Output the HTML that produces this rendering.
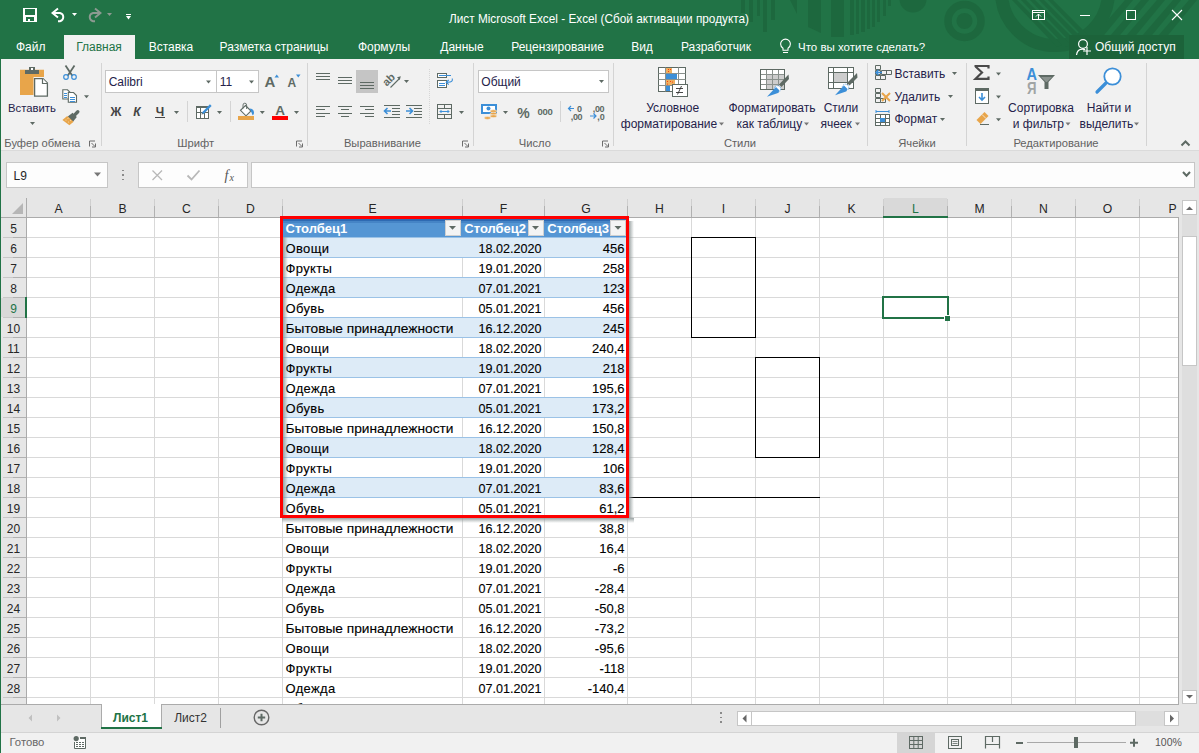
<!DOCTYPE html>
<html><head><meta charset="utf-8"><title>Excel</title>
<style>
html,body{margin:0;padding:0;width:1199px;height:753px;overflow:hidden;background:#fff}
svg{display:block}
rect{shape-rendering:crispEdges}
text{font-family:"Liberation Sans",sans-serif;white-space:pre}
</style></head><body>
<svg width="1199" height="753" viewBox="0 0 1199 753">
<rect x="0" y="0" width="1199" height="59" fill="#217346" />
<rect x="0" y="59" width="1199" height="92" fill="#f1f1f1" />
<rect x="0" y="150" width="1199" height="1" fill="#dadada"/>
<rect x="0" y="151" width="1199" height="47" fill="#e6e6e6" />
<defs><clipPath id="tclip"><rect x="0" y="0" width="1199" height="59"/></clipPath></defs>
<g opacity="0.85" clip-path="url(#tclip)"><rect x="741" y="0" width="4" height="13" fill="#1d673d"/><rect x="749" y="0" width="4" height="22" fill="#1d673d"/><rect x="757" y="0" width="3" height="16" fill="#1d673d"/><rect x="763" y="0" width="4" height="32" fill="#1d673d"/><rect x="771" y="0" width="4" height="20" fill="#1d673d"/><rect x="850" y="0" width="4" height="35" fill="#1d673d"/><rect x="856" y="0" width="3" height="34" fill="#1d673d"/><rect x="861" y="0" width="4" height="32" fill="#1d673d"/><rect x="867" y="0" width="3" height="29" fill="#1d673d"/><rect x="872" y="0" width="3" height="27" fill="#1d673d"/><rect x="877" y="0" width="3" height="22" fill="#1d673d"/><rect x="883" y="0" width="3" height="16" fill="#1d673d"/><rect x="888" y="0" width="3" height="6" fill="#1d673d"/><path d="M790 0 L797 0 L797 14 Z" fill="#1d673d"/><path d="M808 0 L821 0 L821 33 L808 27 Z" fill="#1d673d"/><rect x="831" y="0" width="13" height="37" fill="#1d673d"/><circle cx="913" cy="-1" r="13.5" fill="#1d673d"/><circle cx="964.5" cy="21" r="16.5" fill="none" stroke="#1d673d" stroke-width="7.5"/><circle cx="964.5" cy="21" r="8" fill="#1d673d"/><circle cx="1055" cy="-8" r="53.5" fill="none" stroke="#1d673d" stroke-width="13"/><path d="M1012 0 L1017 0 L1062 45 L1057 47 Z" fill="#1d673d"/><path d="M1021 0 L1026 0 L1071 45 L1066 47 Z" fill="#1d673d"/><path d="M1030 0 L1035 0 L1080 45 L1075 47 Z" fill="#1d673d"/><path d="M1039 0 L1044 0 L1089 45 L1084 47 Z" fill="#1d673d"/><path d="M1048 0 L1053 0 L1098 45 L1093 47 Z" fill="#1d673d"/><path d="M1125 0 L1133 0 L1100 40 L1094 36 Z" fill="#1d673d"/><path d="M1141 0 L1149 0 L1116 40 L1110 36 Z" fill="#1d673d"/><path d="M1157 0 L1165 0 L1132 40 L1126 36 Z" fill="#1d673d"/><path d="M1173 0 L1181 0 L1148 40 L1142 36 Z" fill="#1d673d"/><path d="M1189 0 L1197 0 L1164 40 L1158 36 Z" fill="#1d673d"/></g>
<rect x="23" y="8" width="14" height="14" fill="#ffffff"/>
<rect x="25" y="9.2" width="10" height="5.5" fill="#217346"/>
<rect x="26" y="17" width="8" height="3.7" fill="#217346"/>
<rect x="28.3" y="18.7" width="2" height="2" fill="#ffffff"/>
<path d="M58 8.5 L52.5 13 L58 17.5" fill="none" stroke="#ffffff" stroke-width="1.9"/>
<path d="M53 13 H60 A4.2 4.2 0 0 1 60 21.2 H58" fill="none" stroke="#ffffff" stroke-width="1.9"/>
<path d="M72 13 H77 L74.5 16 Z" fill="#ffffff"/>
<path d="M95 8.5 L100.5 13 L95 17.5" fill="none" stroke="#8c9a91" stroke-width="1.9"/>
<path d="M100 13 H93 A4.2 4.2 0 0 0 93 21.2 H95" fill="none" stroke="#8c9a91" stroke-width="1.9"/>
<path d="M107 13 H112 L109.5 16 Z" fill="#8c9a91"/>
<rect x="126" y="13.5" width="5" height="1.2" fill="#ffffff"/>
<path d="M126 16 H131 L128.5 19.5 Z" fill="#ffffff"/>
<text x="449" y="23" font-size="12.6" fill="#ffffff" textLength="300" lengthAdjust="spacingAndGlyphs">Лист Microsoft Excel - Excel (Сбой активации продукта)</text>
<rect x="1032.5" y="10.5" width="12" height="9" fill="none" stroke="#fff" stroke-width="1"/>
<rect x="1032" y="12" width="13" height="1" fill="#fff"/>
<path d="M1036 16.5 L1038.5 14 L1041 16.5 M1038.5 14 V19.5" fill="none" stroke="#fff" stroke-width="1"/>
<rect x="1080" y="15" width="10" height="1" fill="#fff"/>
<rect x="1126.5" y="10.5" width="9" height="9" fill="none" stroke="#fff" stroke-width="1"/>
<path d="M1172 10 L1182 20 M1182 10 L1172 20" stroke="#fff" stroke-width="1.1"/>
<rect x="64" y="35" width="71" height="24" fill="#f1f1f1" />
<text x="16" y="51" font-size="12" fill="#fff" >Файл</text>
<text x="99" y="51" font-size="12" fill="#217346" text-anchor="middle" >Главная</text>
<text x="171" y="51" font-size="12" fill="#fff" text-anchor="middle" >Вставка</text>
<text x="274" y="51" font-size="12" fill="#fff" text-anchor="middle" >Разметка страницы</text>
<text x="384" y="51" font-size="12" fill="#fff" text-anchor="middle" >Формулы</text>
<text x="462" y="51" font-size="12" fill="#fff" text-anchor="middle" >Данные</text>
<text x="557.5" y="51" font-size="12" fill="#fff" text-anchor="middle" >Рецензирование</text>
<text x="642" y="51" font-size="12" fill="#fff" text-anchor="middle" >Вид</text>
<text x="716" y="51" font-size="12" fill="#fff" text-anchor="middle" >Разработчик</text>
<path d="M783 50.3 V48.3 C781.3 47 780.6 45.6 780.6 44 A4.9 4.9 0 0 1 790.4 44 C790.4 45.6 789.7 47 788 48.3 V50.3 Z" fill="none" stroke="#fff" stroke-width="1.1"/>
<rect x="783" y="52" width="5" height="1" fill="#fff"/>
<text x="798" y="51" font-size="11.5" fill="#fff" >Что вы хотите сделать?</text>
<rect x="1069" y="35" width="115" height="24" fill="#1c633a" />
<circle cx="1083" cy="44" r="4.4" fill="none" stroke="#fff" stroke-width="1.2"/>
<path d="M1076.5 55 C1077 51.5 1079.5 49.2 1082.5 49.2 C1083.5 49.2 1084.5 49.4 1085.2 49.8" fill="none" stroke="#fff" stroke-width="1.2"/>
<path d="M1083 51 H1091 M1087 47 V55" stroke="#fff" stroke-width="1.2"/>
<text x="1095" y="51" font-size="12" fill="#fff" >Общий доступ</text>
<rect x="101" y="63" width="1" height="83" fill="#d4d4d4"/>
<rect x="307" y="63" width="1" height="83" fill="#d4d4d4"/>
<rect x="473" y="63" width="1" height="83" fill="#d4d4d4"/>
<rect x="613" y="63" width="1" height="83" fill="#d4d4d4"/>
<rect x="867" y="63" width="1" height="83" fill="#d4d4d4"/>
<rect x="966" y="63" width="1" height="83" fill="#d4d4d4"/>
<rect x="1146" y="63" width="1" height="83" fill="#d4d4d4"/>
<path d="M20 69.8 H44 V77 H33.5 V95 H20 Z" fill="#e8a54a"/>
<rect x="25" y="70" width="14" height="4" fill="#5e6a64"/>
<rect x="29" y="67" width="6" height="3.5" fill="#5e6a64"/>
<rect x="31" y="68.2" width="2" height="1.6" fill="#fff"/>
<path d="M34.6 78.6 H43 L47.4 83 V96.2 H34.6 Z" fill="#fff" stroke="#5e6a64" stroke-width="1.3"/>
<path d="M42.5 78.6 V83.5 H47.4" fill="#fff" stroke="#5e6a64" stroke-width="1.2"/>
<text x="32" y="112" font-size="11.3" fill="#25224a" text-anchor="middle" >Вставить</text>
<path d="M30.0 122 L35.0 122 L32.5 125.0 Z" fill="#5e6a64"/>
<path d="M65.5 65.5 L72.5 76 M74.5 65.5 L67.5 76" stroke="#5e6a64" stroke-width="1.8" fill="none"/>
<circle cx="66" cy="77" r="2.3" fill="none" stroke="#3c8fd8" stroke-width="1.2"/>
<circle cx="74" cy="77" r="2.3" fill="none" stroke="#3c8fd8" stroke-width="1.2"/>
<path d="M62.8 89.8 H67.5 L70 92.3 V99 H62.8 Z" fill="#fff" stroke="#5e6a64" stroke-width="1.1"/>
<path d="M68.3 92.5 H73.5 L76.5 95.5 V102.3 H68.3 Z" fill="#fff" stroke="#5e6a64" stroke-width="1.1"/>
<rect x="64" y="93" width="3" height="1" fill="#3c8fd8"/>
<rect x="64" y="95" width="3" height="1" fill="#3c8fd8"/>
<rect x="64" y="97" width="3" height="1" fill="#3c8fd8"/>
<rect x="70" y="96.5" width="5" height="1" fill="#3c8fd8"/>
<rect x="70" y="98.5" width="5" height="1" fill="#3c8fd8"/>
<rect x="70" y="100.5" width="5" height="1" fill="#3c8fd8"/>
<path d="M84.0 95.3 L89.0 95.3 L86.5 98.3 Z" fill="#5e6a64"/>
<path d="M77.8 111.8 L74.5 115.1" stroke="#5e6a64" stroke-width="3.4" stroke-linecap="round"/>
<path d="M67.8 116.6 L72.6 112.8 L76.8 117 L73 121.8 Z" fill="#5e6a64"/>
<path d="M62.4 120 L67.2 116 L73.6 121.8 L69.4 125.2 Z" fill="#e8a54a"/>
<circle cx="66" cy="120" r="0.6" fill="#f7d9a8"/><circle cx="68.5" cy="122" r="0.6" fill="#f7d9a8"/><circle cx="68" cy="118.5" r="0.6" fill="#f7d9a8"/><circle cx="70.5" cy="120.5" r="0.6" fill="#f7d9a8"/>
<text x="42.3" y="146.6" font-size="11.2" fill="#616161" text-anchor="middle" >Буфер обмена</text>
<path d="M89.5 146.5 V141.0 H95" fill="none" stroke="#6d6d6d" stroke-width="1"/>
<path d="M91.5 143.0 L95 146.5 M95.5 143.5 V147.0 H92" fill="none" stroke="#6d6d6d" stroke-width="1"/>
<rect x="105.5" y="70.5" width="153" height="22" fill="#fff" stroke="#c6c6c6" stroke-width="1"/>
<rect x="216" y="71" width="1" height="21" fill="#c6c6c6"/>
<text x="108.7" y="86.2" font-size="12" fill="#25224a" >Calibri</text>
<path d="M206.0 80.5 L211.0 80.5 L208.5 83.5 Z" fill="#5e6a64"/>
<text x="219.7" y="86.2" font-size="12" fill="#25224a" >11</text>
<path d="M249.0 80.5 L254.0 80.5 L251.5 83.5 Z" fill="#5e6a64"/>
<text x="264.5" y="87" font-size="15" fill="#5e6a64" font-weight="700" >A</text>
<path d="M274.5 77.5 L279 77.5 L276.75 74.5 Z" fill="#3c8fd8"/>
<text x="287.5" y="87" font-size="12" fill="#5e6a64" font-weight="700" >A</text>
<path d="M296 74.5 L300.5 74.5 L298.25 77.5 Z" fill="#3c8fd8"/>
<text x="116" y="115.5" font-size="12" fill="#444" text-anchor="middle" font-weight="700" >Ж</text>
<text x="137" y="115.5" font-size="12" fill="#444" text-anchor="middle" font-weight="700" font-style="italic">К</text>
<text x="160" y="115.5" font-size="12" fill="#444" text-anchor="middle" font-weight="700" >Ч</text>
<rect x="155" y="117" width="10" height="1" fill="#444"/>
<path d="M174.0 111 L179.0 111 L176.5 114.0 Z" fill="#5e6a64"/>
<rect x="187" y="101" width="1" height="21" fill="#d4d4d4"/>
<rect x="196.5" y="106.5" width="12" height="12" fill="#fff" stroke="#5e6a64" stroke-width="1.2"/>
<rect x="196" y="106" width="13" height="2" fill="#5e6a64" />
<path d="M200.5 108 V118.5 M196.5 112.5 H208.5 M204.5 112.5 V118.5" stroke="#5e6a64" stroke-width="1"/>
<path d="M202.5 113.5 L210.8 105.2" stroke="#3c8fd8" stroke-width="2.4"/>
<path d="M201.5 114.5 L202 112.5 L203.5 114 Z" fill="#5e6a64"/>
<path d="M217.0 111 L222.0 111 L219.5 114.0 Z" fill="#5e6a64"/>
<rect x="230" y="101" width="1" height="21" fill="#d4d4d4"/>
<path d="M245.5 105.5 L251 111 L246 115.8 L240.5 110.3 Z" fill="#fff" stroke="#5e6a64" stroke-width="1.1"/>
<path d="M243 108.5 V105 A1.8 1.8 0 0 1 246.6 105 V109" fill="none" stroke="#5e6a64" stroke-width="0.9"/>
<path d="M249.5 108.5 C252 108.5 254 110 254 112.5 C254 114 253.3 115.2 252.6 115.2 L251.2 111.8 Z" fill="#3c8fd8"/>
<rect x="238" y="116" width="16" height="4" fill="#e8a54a" />
<path d="M259.8 111 L264.8 111 L262.3 114.0 Z" fill="#5e6a64"/>
<text x="280" y="115" font-size="13.5" fill="#5e6a64" text-anchor="middle" font-weight="700" >A</text>
<rect x="272" y="116" width="16" height="4" fill="#ff0000" />
<path d="M294.0 111 L299.0 111 L296.5 114.0 Z" fill="#5e6a64"/>
<text x="195.7" y="146.6" font-size="11.2" fill="#616161" text-anchor="middle" >Шрифт</text>
<path d="M296.5 146.5 V141.0 H302" fill="none" stroke="#6d6d6d" stroke-width="1"/>
<path d="M298.5 143.0 L302 146.5 M302.5 143.5 V147.0 H299" fill="none" stroke="#6d6d6d" stroke-width="1"/>
<rect x="316" y="73" width="14" height="1" fill="#5e6a64"/>
<rect x="316" y="76" width="14" height="1" fill="#5e6a64"/>
<rect x="316" y="79" width="14" height="1" fill="#5e6a64"/>
<rect x="338" y="77" width="14" height="1" fill="#5e6a64"/>
<rect x="338" y="80" width="14" height="1" fill="#5e6a64"/>
<rect x="338" y="83" width="14" height="1" fill="#5e6a64"/>
<rect x="356" y="70" width="22" height="22.5" fill="#c5c5c5" />
<rect x="360" y="82" width="14" height="1" fill="#5e6a64"/>
<rect x="360" y="85" width="14" height="1" fill="#5e6a64"/>
<rect x="360" y="88" width="14" height="1" fill="#5e6a64"/>
<text x="388.5" y="83.5" font-size="11" fill="#5e6a64" text-anchor="middle" font-weight="700" transform="rotate(-45 388.5 79.5)">ab</text>
<path d="M390.5 87.5 L399.5 78.5" stroke="#5e6a64" stroke-width="1.1"/>
<path d="M397 77.2 L400.8 76.2 L399.8 80 Z" fill="#5e6a64"/>
<path d="M404.0 80 L409.0 80 L406.5 83.0 Z" fill="#5e6a64"/>
<path d="M429.5 69 V124" stroke="#d6d6d6" stroke-width="1" stroke-dasharray="1 1"/>
<rect x="437.5" y="73.5" width="9" height="4" fill="#fff" stroke="#5e6a64" stroke-width="1.1"/>
<rect x="437.5" y="80.5" width="9" height="7" fill="#fff" stroke="#5e6a64" stroke-width="1.1"/>
<rect x="439" y="75" width="12" height="1" fill="#3c8fd8"/>
<rect x="439" y="82.5" width="6" height="1" fill="#3c8fd8"/>
<rect x="439" y="84.5" width="6" height="1" fill="#3c8fd8"/>
<path d="M452.3 78.5 C452.8 81 451.5 82.3 448 82.3 H446.5" fill="none" stroke="#3c8fd8" stroke-width="1.1"/>
<path d="M448.7 80 L446.3 82.3 L448.7 84.6" fill="none" stroke="#3c8fd8" stroke-width="1.2"/>
<rect x="437.5" y="104.5" width="14" height="14" fill="none" stroke="#5e6a64" stroke-width="1.2"/>
<path d="M437.5 108.5 H451.5 M437.5 114.5 H451.5 M444.5 104.5 V108.5 M444.5 114.5 V118.5" stroke="#5e6a64" stroke-width="1"/>
<path d="M440 111.5 H449 M441.5 110 L440 111.5 L441.5 113 M447.5 110 L449 111.5 L447.5 113" fill="none" stroke="#3c8fd8" stroke-width="1"/>
<path d="M459.0 111 L464.0 111 L461.5 114.0 Z" fill="#5e6a64"/>
<rect x="316" y="106" width="14" height="1" fill="#5e6a64"/>
<rect x="316" y="109" width="9" height="1" fill="#5e6a64"/>
<rect x="316" y="113" width="14" height="1" fill="#5e6a64"/>
<rect x="316" y="116" width="9" height="1" fill="#5e6a64"/>
<rect x="338" y="106" width="14" height="1" fill="#5e6a64"/>
<rect x="338" y="113" width="14" height="1" fill="#5e6a64"/>
<rect x="341" y="109" width="8" height="1" fill="#5e6a64"/>
<rect x="341" y="116" width="8" height="1" fill="#5e6a64"/>
<rect x="360" y="106" width="14" height="1" fill="#5e6a64"/>
<rect x="360" y="113" width="14" height="1" fill="#5e6a64"/>
<rect x="365" y="109" width="9" height="1" fill="#5e6a64"/>
<rect x="365" y="116" width="9" height="1" fill="#5e6a64"/>
<rect x="384" y="105" width="16" height="1" fill="#5e6a64"/>
<rect x="384" y="117" width="16" height="1" fill="#5e6a64"/>
<rect x="392" y="108" width="8" height="1" fill="#5e6a64"/>
<rect x="392" y="111" width="8" height="1" fill="#5e6a64"/>
<rect x="392" y="114" width="8" height="1" fill="#5e6a64"/>
<path d="M384.5 111 H391 M387.5 108 L384.5 111 L387.5 114" fill="none" stroke="#3c8fd8" stroke-width="1.6"/>
<rect x="406" y="105" width="16" height="1" fill="#5e6a64"/>
<rect x="406" y="117" width="16" height="1" fill="#5e6a64"/>
<rect x="414" y="108" width="8" height="1" fill="#5e6a64"/>
<rect x="414" y="111" width="8" height="1" fill="#5e6a64"/>
<rect x="414" y="114" width="8" height="1" fill="#5e6a64"/>
<path d="M406 111 H412.5 M409.5 108 L412.5 111 L409.5 114" fill="none" stroke="#3c8fd8" stroke-width="1.6"/>
<text x="382.4" y="146.6" font-size="11.2" fill="#616161" text-anchor="middle" >Выравнивание</text>
<path d="M462.5 146.5 V141.0 H468" fill="none" stroke="#6d6d6d" stroke-width="1"/>
<path d="M464.5 143.0 L468 146.5 M468.5 143.5 V147.0 H465" fill="none" stroke="#6d6d6d" stroke-width="1"/>
<rect x="478.5" y="70.5" width="130" height="22" fill="#fff" stroke="#c6c6c6" stroke-width="1"/>
<text x="481.3" y="86" font-size="12" fill="#25224a" >Общий</text>
<path d="M599.0 80 L604.0 80 L601.5 83.0 Z" fill="#5e6a64"/>
<rect x="482" y="105" width="14" height="8" fill="#fff" stroke="#3c8fd8" stroke-width="2"/>
<circle cx="488.5" cy="108.5" r="2" fill="#3c8fd8"/>
<ellipse cx="493.5" cy="111.2" rx="3.3" ry="1.4" fill="#e8a54a" stroke="#f1f1f1" stroke-width="0.6"/>
<ellipse cx="493.5" cy="113.7" rx="3.3" ry="1.4" fill="#e8a54a" stroke="#f1f1f1" stroke-width="0.6"/>
<ellipse cx="493.5" cy="116.2" rx="3.3" ry="1.4" fill="#e8a54a" stroke="#f1f1f1" stroke-width="0.6"/>
<ellipse cx="487.5" cy="118" rx="3.3" ry="1.4" fill="#e8a54a" stroke="#f1f1f1" stroke-width="0.6"/>
<path d="M503.0 111 L508.0 111 L505.5 114.0 Z" fill="#5e6a64"/>
<text x="523.5" y="117.8" font-size="14" fill="#5e6a64" text-anchor="middle" font-weight="700" >%</text>
<text x="545" y="114.8" font-size="9.5" fill="#5e6a64" text-anchor="middle" font-weight="700" letter-spacing="-0.3" >000</text>
<rect x="560" y="101" width="1" height="21" fill="#d4d4d4"/>
<path d="M568.5 108.5 H574 M571 106 L568.5 108.5 L571 111" fill="none" stroke="#3c8fd8" stroke-width="1.2"/>
<text x="579.5" y="112" font-size="9" fill="#5e6a64" text-anchor="middle" font-weight="700" >0</text>
<text x="576.5" y="120" font-size="9" fill="#5e6a64" text-anchor="middle" font-weight="700" letter-spacing="-0.3" >,00</text>
<text x="598.5" y="112" font-size="9" fill="#5e6a64" text-anchor="middle" font-weight="700" letter-spacing="-0.3" >,00</text>
<path d="M590 116 H596 M593.5 113.5 L596 116 L593.5 118.5" fill="none" stroke="#3c8fd8" stroke-width="1.2"/>
<text x="601" y="120" font-size="9" fill="#5e6a64" text-anchor="middle" font-weight="700" >,0</text>
<text x="534.8" y="146.6" font-size="11.2" fill="#616161" text-anchor="middle" >Число</text>
<path d="M602.5 146.5 V141.0 H608" fill="none" stroke="#6d6d6d" stroke-width="1"/>
<path d="M604.5 143.0 L608 146.5 M608.5 143.5 V147.0 H605" fill="none" stroke="#6d6d6d" stroke-width="1"/>
<rect x="658.8" y="67.8" width="26.4" height="23.6" fill="#fff" stroke="#5e6a64" stroke-width="1.3"/>
<path d="M658.5 73.5 H685.5" stroke="#8a918d" stroke-width="1"/>
<path d="M658.5 79.5 H685.5" stroke="#8a918d" stroke-width="1"/>
<path d="M658.5 85.5 H685.5" stroke="#8a918d" stroke-width="1"/>
<path d="M665.5 67.5 V91.5" stroke="#8a918d" stroke-width="1"/>
<path d="M678.5 67.5 V91.5" stroke="#8a918d" stroke-width="1"/>
<rect x="666" y="68" width="6" height="5" fill="#eeb060" />
<rect x="666" y="74" width="11" height="5" fill="#3c8fd8" />
<rect x="666" y="80" width="9" height="5" fill="#eeb060" />
<rect x="666" y="86" width="4" height="5" fill="#3c8fd8" />
<circle cx="668.5" cy="69.5" r="0.55" fill="#ff2a00"/>
<circle cx="670.5" cy="69.5" r="0.55" fill="#ff2a00"/>
<circle cx="668.5" cy="71.5" r="0.55" fill="#ff2a00"/>
<circle cx="667.5" cy="81.5" r="0.55" fill="#ff2a00"/>
<circle cx="670.5" cy="81.5" r="0.55" fill="#ff2a00"/>
<circle cx="672.5" cy="82" r="0.55" fill="#ff2a00"/>
<circle cx="667.5" cy="84" r="0.55" fill="#ff2a00"/>
<rect x="672.3" y="84.3" width="15.2" height="12.2" fill="#fff" stroke="#5e6a64" stroke-width="1.3"/>
<path d="M676 88.5 H683 M676 92.5 H683 M677.5 94.5 L681.5 86" stroke="#333" stroke-width="0.9"/>
<text x="672.7" y="112.3" font-size="12" fill="#25224a" text-anchor="middle" >Условное</text>
<text x="620.8" y="127.7" font-size="12" fill="#25224a" >форматирование</text>
<path d="M719.0 122.5 L724.0 122.5 L721.5 125.5 Z" fill="#777"/>
<rect x="760.5" y="69.5" width="24" height="20" fill="#fff"/>
<rect x="767" y="75" width="18" height="15" fill="#cdcdcd" />
<path d="M760.5 74.5 H784.5" stroke="#8a918d" stroke-width="1"/>
<path d="M760.5 79.5 H784.5" stroke="#8a918d" stroke-width="1"/>
<path d="M760.5 84.5 H784.5" stroke="#8a918d" stroke-width="1"/>
<path d="M766.5 69.5 V89.5" stroke="#8a918d" stroke-width="1"/>
<path d="M772.5 69.5 V89.5" stroke="#8a918d" stroke-width="1"/>
<path d="M778.5 69.5 V89.5" stroke="#8a918d" stroke-width="1"/>
<rect x="760.5" y="69.5" width="24" height="20" fill="none" stroke="#5e6a64" stroke-width="1.2"/>
<path d="M788.5 74.5 L789 79 L781.5 87 L779 84.5 Z" fill="#5e6a64"/>
<circle cx="777.5" cy="89" r="3.3" fill="#fff" stroke="#3c8fd8" stroke-width="0.8" stroke-dasharray="1 0.8"/>
<path d="M776 87 L779.5 90.5 L778 93 L767 96.8 Z" fill="#3c8fd8"/>
<text x="772" y="112.3" font-size="12" fill="#25224a" text-anchor="middle" >Форматировать</text>
<text x="736.5" y="127.7" font-size="12" fill="#25224a" >как таблицу</text>
<path d="M804.0 122.5 L809.0 122.5 L806.5 125.5 Z" fill="#777"/>
<rect x="828.5" y="67.5" width="25" height="21" fill="#fff"/>
<rect x="834" y="73" width="13" height="10" fill="#cdcdcd" />
<path d="M828.5 72.5 H853.5 M828.5 82.5 H853.5 M833.5 67.5 V88.5 M847.5 67.5 V88.5" stroke="#5e6a64" stroke-width="1"/>
<rect x="828.5" y="67.5" width="25" height="21" fill="none" stroke="#5e6a64" stroke-width="1.2"/>
<path d="M857 73 L857.5 77.5 L849.5 85.5 L847 83 Z" fill="#5e6a64"/>
<circle cx="845.5" cy="87.5" r="3.3" fill="#fff" stroke="#3c8fd8" stroke-width="0.8" stroke-dasharray="1 0.8"/>
<path d="M844 85.5 L847.5 89 L846 91.5 L835 95.3 Z" fill="#3c8fd8"/>
<text x="841" y="112.3" font-size="12" fill="#25224a" text-anchor="middle" >Стили</text>
<text x="820.4" y="127.7" font-size="12" fill="#25224a" >ячеек</text>
<path d="M855.0 122.5 L860.0 122.5 L857.5 125.5 Z" fill="#777"/>
<text x="740" y="146.6" font-size="11.2" fill="#616161" text-anchor="middle" >Стили</text>
<path d="M875.5 65.5 h5 v4 h-5 z M875.5 70.5 h5 v4 h-5 z M875.5 75.5 h5 v4 h-5 z M880.5 75.5 h5 v4 h-5 z" fill="none" stroke="#5e6a64" stroke-width="1"/>
<path d="M881.5 70.5 h10 v4 h-10 z M886.5 70.5 V74.5" fill="none" stroke="#5e6a64" stroke-width="1"/>
<path d="M876 72.5 H882 M878.5 70 L876 72.5 L878.5 75" fill="none" stroke="#3c8fd8" stroke-width="1.5"/>
<text x="894.5" y="77.8" font-size="12" fill="#25224a" >Вставить</text>
<path d="M952.0 72 L957.0 72 L954.5 75.0 Z" fill="#5e6a64"/>
<path d="M875.5 88.5 h5 v4 h-5 z M875.5 93.5 h5 v4 h-5 z M875.5 98.5 h5 v4 h-5 z M880.5 98.5 h5 v4 h-5 z" fill="none" stroke="#5e6a64" stroke-width="1"/>
<path d="M882 93 L890 101 M890 93 L882 101" stroke="#e8a54a" stroke-width="2"/>
<text x="894.5" y="100.8" font-size="12" fill="#25224a" >Удалить</text>
<path d="M948.0 95 L953.0 95 L950.5 98.0 Z" fill="#5e6a64"/>
<rect x="875.5" y="114.5" width="14" height="11" fill="#fff" stroke="#5e6a64" stroke-width="1"/>
<path d="M875.5 118.5 H889.5 M875.5 122.5 H889.5 M880.5 114.5 V125.5 M885.5 114.5 V125.5" stroke="#5e6a64" stroke-width="1"/>
<rect x="880" y="118" width="5" height="4" fill="#3c8fd8" />
<path d="M876 111.5 H889 M876 110 V113 M889 110 V113" stroke="#3c8fd8" stroke-width="1"/>
<text x="894.5" y="123.4" font-size="12" fill="#25224a" >Формат</text>
<path d="M940.0 118 L945.0 118 L942.5 121.0 Z" fill="#5e6a64"/>
<text x="917" y="146.6" font-size="11.2" fill="#616161" text-anchor="middle" >Ячейки</text>
<path d="M974.5 66 H988.5 V68.5 M975.5 66.5 L982 72.5 L975.5 78.8 H988.5 V76.5" fill="none" stroke="#4a4a4a" stroke-width="2.2"/>
<path d="M996.0 72.5 L1001.0 72.5 L998.5 75.5 Z" fill="#5e6a64"/>
<rect x="975.5" y="88.5" width="13" height="15" fill="#fff" stroke="#5e6a64" stroke-width="1.2"/>
<rect x="975" y="88" width="14" height="3" fill="#5e6a64" />
<path d="M982 93 V100 M979 97 L982 100 L985 97" fill="none" stroke="#3c8fd8" stroke-width="1.6"/>
<path d="M996.0 95.4 L1001.0 95.4 L998.5 98.4 Z" fill="#5e6a64"/>
<path d="M984.5 112 L988.5 116 L980.5 124 L976.5 120 Z" fill="#e8a54a"/>
<path d="M982 114.5 L986 118.5" stroke="#f1f1f1" stroke-width="0.8"/>
<rect x="980" y="124" width="9" height="1" fill="#5e6a64"/>
<path d="M996.0 118.3 L1001.0 118.3 L998.5 121.3 Z" fill="#5e6a64"/>
<text x="1026.5" y="80" font-size="16.5" fill="#3c8fd8" font-weight="700" textLength="10.5" lengthAdjust="spacingAndGlyphs">А</text>
<text x="1027" y="94" font-size="16.5" fill="#a0a4a4" font-weight="700" textLength="9.5" lengthAdjust="spacingAndGlyphs">Я</text>
<path d="M1038 75 H1055 L1048.5 82 V89 H1044.5 V82 Z" fill="#5e6a64"/>
<path d="M1041 77 H1052 L1047 82 H1046 Z" fill="#8a928e"/>
<text x="1041" y="112.3" font-size="12" fill="#25224a" text-anchor="middle" >Сортировка</text>
<text x="1012.8" y="127.7" font-size="12" fill="#25224a" >и фильтр</text>
<path d="M1065.5 122.5 L1070.5 122.5 L1068 125.5 Z" fill="#777"/>
<circle cx="1112.5" cy="76.5" r="8.2" fill="#fff" stroke="#3c8fd8" stroke-width="1.8"/>
<path d="M1106 83 L1097 92" stroke="#3c8fd8" stroke-width="3.2" stroke-linecap="round"/>
<text x="1109" y="112.3" font-size="12" fill="#25224a" text-anchor="middle" >Найти и</text>
<text x="1079.5" y="127.7" font-size="12" fill="#25224a" >выделить</text>
<path d="M1134.0 122.5 L1139.0 122.5 L1136.5 125.5 Z" fill="#777"/>
<text x="1056" y="146.6" font-size="11.2" fill="#616161" text-anchor="middle" >Редактирование</text>
<path d="M1181.5 145.5 L1185.5 141.5 L1189.5 145.5" fill="none" stroke="#5e6a64" stroke-width="2"/>
<rect x="6.5" y="162.5" width="101" height="25" fill="#fdfdfd" stroke="#c6c6c6" stroke-width="1"/>
<text x="13.5" y="180" font-size="12" fill="#262626" >L9</text>
<path d="M94.0 172.5 L101.0 172.5 L97.5 176.5 Z" fill="#777"/>
<rect x="122" y="169.75" width="1.5" height="1.5" fill="#8a8a8a"/>
<rect x="122" y="174.25" width="1.5" height="1.5" fill="#8a8a8a"/>
<rect x="122" y="178.75" width="1.5" height="1.5" fill="#8a8a8a"/>
<rect x="138.5" y="162.5" width="109" height="25" fill="#fdfdfd" stroke="#c6c6c6" stroke-width="1"/>
<path d="M152.5 170.5 L162 180 M162 170.5 L152.5 180" stroke="#b8b8b8" stroke-width="1.3"/>
<path d="M187.5 175.5 L191.5 179.5 L199.5 170.5" fill="none" stroke="#b8b8b8" stroke-width="1.8"/>
<text x="224.5" y="180" font-size="14" fill="#555" font-style="italic" style="font-family:&quot;Liberation Serif&quot;,serif">f</text>
<text x="229.5" y="181" font-size="10" fill="#555" font-style="italic" style="font-family:&quot;Liberation Serif&quot;,serif">x</text>
<rect x="251.5" y="162.5" width="943" height="25" fill="#fdfdfd" stroke="#c6c6c6" stroke-width="1"/>
<path d="M1183 172 L1186.5 175.8 L1190 172" fill="none" stroke="#5e6a64" stroke-width="2"/>
<rect x="1" y="198" width="1178" height="20" fill="#e6e6e6" />
<rect x="1" y="218" width="26" height="486" fill="#e6e6e6" />
<rect x="27" y="218" width="1151" height="486" fill="#ffffff" />
<rect x="884" y="198" width="63" height="18" fill="#d9d9d9" />
<rect x="1" y="298" width="25" height="19" fill="#d9d9d9" />
<rect x="90" y="218" width="1" height="486" fill="#d9d9d9"/>
<rect x="154" y="218" width="1" height="486" fill="#d9d9d9"/>
<rect x="218" y="218" width="1" height="486" fill="#d9d9d9"/>
<rect x="282" y="218" width="1" height="486" fill="#d9d9d9"/>
<rect x="462" y="218" width="1" height="486" fill="#d9d9d9"/>
<rect x="544" y="218" width="1" height="486" fill="#d9d9d9"/>
<rect x="627" y="218" width="1" height="486" fill="#d9d9d9"/>
<rect x="691" y="218" width="1" height="486" fill="#d9d9d9"/>
<rect x="755" y="218" width="1" height="486" fill="#d9d9d9"/>
<rect x="819" y="218" width="1" height="486" fill="#d9d9d9"/>
<rect x="883" y="218" width="1" height="486" fill="#d9d9d9"/>
<rect x="947" y="218" width="1" height="486" fill="#d9d9d9"/>
<rect x="1011" y="218" width="1" height="486" fill="#d9d9d9"/>
<rect x="1075" y="218" width="1" height="486" fill="#d9d9d9"/>
<rect x="1139" y="218" width="1" height="486" fill="#d9d9d9"/>
<rect x="27" y="237" width="1151" height="1" fill="#d9d9d9"/>
<rect x="27" y="257" width="1151" height="1" fill="#d9d9d9"/>
<rect x="27" y="277" width="1151" height="1" fill="#d9d9d9"/>
<rect x="27" y="297" width="1151" height="1" fill="#d9d9d9"/>
<rect x="27" y="317" width="1151" height="1" fill="#d9d9d9"/>
<rect x="27" y="337" width="1151" height="1" fill="#d9d9d9"/>
<rect x="27" y="357" width="1151" height="1" fill="#d9d9d9"/>
<rect x="27" y="377" width="1151" height="1" fill="#d9d9d9"/>
<rect x="27" y="397" width="1151" height="1" fill="#d9d9d9"/>
<rect x="27" y="417" width="1151" height="1" fill="#d9d9d9"/>
<rect x="27" y="437" width="1151" height="1" fill="#d9d9d9"/>
<rect x="27" y="457" width="1151" height="1" fill="#d9d9d9"/>
<rect x="27" y="477" width="1151" height="1" fill="#d9d9d9"/>
<rect x="27" y="497" width="1151" height="1" fill="#d9d9d9"/>
<rect x="27" y="517" width="1151" height="1" fill="#d9d9d9"/>
<rect x="27" y="537" width="1151" height="1" fill="#d9d9d9"/>
<rect x="27" y="557" width="1151" height="1" fill="#d9d9d9"/>
<rect x="27" y="577" width="1151" height="1" fill="#d9d9d9"/>
<rect x="27" y="597" width="1151" height="1" fill="#d9d9d9"/>
<rect x="27" y="617" width="1151" height="1" fill="#d9d9d9"/>
<rect x="27" y="637" width="1151" height="1" fill="#d9d9d9"/>
<rect x="27" y="657" width="1151" height="1" fill="#d9d9d9"/>
<rect x="27" y="677" width="1151" height="1" fill="#d9d9d9"/>
<rect x="27" y="697" width="1151" height="1" fill="#d9d9d9"/>
<rect x="90" y="199" width="1" height="7" fill="#cfcfcf"/>
<rect x="90" y="206" width="1" height="11" fill="#b1b1b1"/>
<rect x="154" y="199" width="1" height="7" fill="#cfcfcf"/>
<rect x="154" y="206" width="1" height="11" fill="#b1b1b1"/>
<rect x="218" y="199" width="1" height="7" fill="#cfcfcf"/>
<rect x="218" y="206" width="1" height="11" fill="#b1b1b1"/>
<rect x="282" y="199" width="1" height="7" fill="#cfcfcf"/>
<rect x="282" y="206" width="1" height="11" fill="#b1b1b1"/>
<rect x="462" y="199" width="1" height="7" fill="#cfcfcf"/>
<rect x="462" y="206" width="1" height="11" fill="#b1b1b1"/>
<rect x="544" y="199" width="1" height="7" fill="#cfcfcf"/>
<rect x="544" y="206" width="1" height="11" fill="#b1b1b1"/>
<rect x="627" y="199" width="1" height="7" fill="#cfcfcf"/>
<rect x="627" y="206" width="1" height="11" fill="#b1b1b1"/>
<rect x="691" y="199" width="1" height="7" fill="#cfcfcf"/>
<rect x="691" y="206" width="1" height="11" fill="#b1b1b1"/>
<rect x="755" y="199" width="1" height="7" fill="#cfcfcf"/>
<rect x="755" y="206" width="1" height="11" fill="#b1b1b1"/>
<rect x="819" y="199" width="1" height="7" fill="#cfcfcf"/>
<rect x="819" y="206" width="1" height="11" fill="#b1b1b1"/>
<rect x="883" y="199" width="1" height="7" fill="#cfcfcf"/>
<rect x="883" y="206" width="1" height="11" fill="#b1b1b1"/>
<rect x="947" y="199" width="1" height="7" fill="#cfcfcf"/>
<rect x="947" y="206" width="1" height="11" fill="#b1b1b1"/>
<rect x="1011" y="199" width="1" height="7" fill="#cfcfcf"/>
<rect x="1011" y="206" width="1" height="11" fill="#b1b1b1"/>
<rect x="1075" y="199" width="1" height="7" fill="#cfcfcf"/>
<rect x="1075" y="206" width="1" height="11" fill="#b1b1b1"/>
<rect x="1139" y="199" width="1" height="7" fill="#cfcfcf"/>
<rect x="1139" y="206" width="1" height="11" fill="#b1b1b1"/>
<rect x="1" y="217" width="1178" height="1" fill="#ababab"/>
<rect x="26" y="198" width="1" height="506" fill="#ababab"/>
<rect x="1178" y="218" width="1" height="486" fill="#ababab"/>
<rect x="3" y="237" width="10" height="1" fill="#c8c8c8"/>
<rect x="13" y="237" width="13" height="1" fill="#b1b1b1"/>
<rect x="3" y="257" width="10" height="1" fill="#c8c8c8"/>
<rect x="13" y="257" width="13" height="1" fill="#b1b1b1"/>
<rect x="3" y="277" width="10" height="1" fill="#c8c8c8"/>
<rect x="13" y="277" width="13" height="1" fill="#b1b1b1"/>
<rect x="3" y="297" width="10" height="1" fill="#c8c8c8"/>
<rect x="13" y="297" width="13" height="1" fill="#b1b1b1"/>
<rect x="3" y="317" width="10" height="1" fill="#c8c8c8"/>
<rect x="13" y="317" width="13" height="1" fill="#b1b1b1"/>
<rect x="3" y="337" width="10" height="1" fill="#c8c8c8"/>
<rect x="13" y="337" width="13" height="1" fill="#b1b1b1"/>
<rect x="3" y="357" width="10" height="1" fill="#c8c8c8"/>
<rect x="13" y="357" width="13" height="1" fill="#b1b1b1"/>
<rect x="3" y="377" width="10" height="1" fill="#c8c8c8"/>
<rect x="13" y="377" width="13" height="1" fill="#b1b1b1"/>
<rect x="3" y="397" width="10" height="1" fill="#c8c8c8"/>
<rect x="13" y="397" width="13" height="1" fill="#b1b1b1"/>
<rect x="3" y="417" width="10" height="1" fill="#c8c8c8"/>
<rect x="13" y="417" width="13" height="1" fill="#b1b1b1"/>
<rect x="3" y="437" width="10" height="1" fill="#c8c8c8"/>
<rect x="13" y="437" width="13" height="1" fill="#b1b1b1"/>
<rect x="3" y="457" width="10" height="1" fill="#c8c8c8"/>
<rect x="13" y="457" width="13" height="1" fill="#b1b1b1"/>
<rect x="3" y="477" width="10" height="1" fill="#c8c8c8"/>
<rect x="13" y="477" width="13" height="1" fill="#b1b1b1"/>
<rect x="3" y="497" width="10" height="1" fill="#c8c8c8"/>
<rect x="13" y="497" width="13" height="1" fill="#b1b1b1"/>
<rect x="3" y="517" width="10" height="1" fill="#c8c8c8"/>
<rect x="13" y="517" width="13" height="1" fill="#b1b1b1"/>
<rect x="3" y="537" width="10" height="1" fill="#c8c8c8"/>
<rect x="13" y="537" width="13" height="1" fill="#b1b1b1"/>
<rect x="3" y="557" width="10" height="1" fill="#c8c8c8"/>
<rect x="13" y="557" width="13" height="1" fill="#b1b1b1"/>
<rect x="3" y="577" width="10" height="1" fill="#c8c8c8"/>
<rect x="13" y="577" width="13" height="1" fill="#b1b1b1"/>
<rect x="3" y="597" width="10" height="1" fill="#c8c8c8"/>
<rect x="13" y="597" width="13" height="1" fill="#b1b1b1"/>
<rect x="3" y="617" width="10" height="1" fill="#c8c8c8"/>
<rect x="13" y="617" width="13" height="1" fill="#b1b1b1"/>
<rect x="3" y="637" width="10" height="1" fill="#c8c8c8"/>
<rect x="13" y="637" width="13" height="1" fill="#b1b1b1"/>
<rect x="3" y="657" width="10" height="1" fill="#c8c8c8"/>
<rect x="13" y="657" width="13" height="1" fill="#b1b1b1"/>
<rect x="3" y="677" width="10" height="1" fill="#c8c8c8"/>
<rect x="13" y="677" width="13" height="1" fill="#b1b1b1"/>
<rect x="3" y="697" width="10" height="1" fill="#c8c8c8"/>
<rect x="13" y="697" width="13" height="1" fill="#b1b1b1"/>
<path d="M12 214 L23 203 L23 214 Z" fill="#b6b6b6"/>
<text x="58.5" y="212.8" font-size="12.2" fill="#262626" text-anchor="middle" >A</text>
<text x="122.5" y="212.8" font-size="12.2" fill="#262626" text-anchor="middle" >B</text>
<text x="186.5" y="212.8" font-size="12.2" fill="#262626" text-anchor="middle" >C</text>
<text x="250.5" y="212.8" font-size="12.2" fill="#262626" text-anchor="middle" >D</text>
<text x="372.5" y="212.8" font-size="12.2" fill="#262626" text-anchor="middle" >E</text>
<text x="503.5" y="212.8" font-size="12.2" fill="#262626" text-anchor="middle" >F</text>
<text x="586.0" y="212.8" font-size="12.2" fill="#262626" text-anchor="middle" >G</text>
<text x="659.5" y="212.8" font-size="12.2" fill="#262626" text-anchor="middle" >H</text>
<text x="723.5" y="212.8" font-size="12.2" fill="#262626" text-anchor="middle" >I</text>
<text x="787.5" y="212.8" font-size="12.2" fill="#262626" text-anchor="middle" >J</text>
<text x="851.5" y="212.8" font-size="12.2" fill="#262626" text-anchor="middle" >K</text>
<text x="915.5" y="212.8" font-size="12.2" fill="#217346" text-anchor="middle" >L</text>
<text x="979.5" y="212.8" font-size="12.2" fill="#262626" text-anchor="middle" >M</text>
<text x="1043.5" y="212.8" font-size="12.2" fill="#262626" text-anchor="middle" >N</text>
<text x="1107.5" y="212.8" font-size="12.2" fill="#262626" text-anchor="middle" >O</text>
<text x="1172.5" y="212.8" font-size="12.2" fill="#262626" text-anchor="middle" >P</text>
<rect x="883" y="216" width="65" height="2" fill="#217346" />
<rect x="25" y="297" width="2" height="21" fill="#217346" />
<text x="13.5" y="233" font-size="12" fill="#262626" text-anchor="middle" >5</text>
<text x="13.5" y="253" font-size="12" fill="#262626" text-anchor="middle" >6</text>
<text x="13.5" y="273" font-size="12" fill="#262626" text-anchor="middle" >7</text>
<text x="13.5" y="293" font-size="12" fill="#262626" text-anchor="middle" >8</text>
<text x="13.5" y="313" font-size="12" fill="#217346" text-anchor="middle" >9</text>
<text x="13.5" y="333" font-size="12" fill="#262626" text-anchor="middle" >10</text>
<text x="13.5" y="353" font-size="12" fill="#262626" text-anchor="middle" >11</text>
<text x="13.5" y="373" font-size="12" fill="#262626" text-anchor="middle" >12</text>
<text x="13.5" y="393" font-size="12" fill="#262626" text-anchor="middle" >13</text>
<text x="13.5" y="413" font-size="12" fill="#262626" text-anchor="middle" >14</text>
<text x="13.5" y="433" font-size="12" fill="#262626" text-anchor="middle" >15</text>
<text x="13.5" y="453" font-size="12" fill="#262626" text-anchor="middle" >16</text>
<text x="13.5" y="473" font-size="12" fill="#262626" text-anchor="middle" >17</text>
<text x="13.5" y="493" font-size="12" fill="#262626" text-anchor="middle" >18</text>
<text x="13.5" y="513" font-size="12" fill="#262626" text-anchor="middle" >19</text>
<text x="13.5" y="533" font-size="12" fill="#262626" text-anchor="middle" >20</text>
<text x="13.5" y="553" font-size="12" fill="#262626" text-anchor="middle" >21</text>
<text x="13.5" y="573" font-size="12" fill="#262626" text-anchor="middle" >22</text>
<text x="13.5" y="593" font-size="12" fill="#262626" text-anchor="middle" >23</text>
<text x="13.5" y="613" font-size="12" fill="#262626" text-anchor="middle" >24</text>
<text x="13.5" y="633" font-size="12" fill="#262626" text-anchor="middle" >25</text>
<text x="13.5" y="653" font-size="12" fill="#262626" text-anchor="middle" >26</text>
<text x="13.5" y="673" font-size="12" fill="#262626" text-anchor="middle" >27</text>
<text x="13.5" y="693" font-size="12" fill="#262626" text-anchor="middle" >28</text>
<rect x="283" y="218" width="344" height="19" fill="#5596d4" />
<rect x="283" y="219" width="344" height="2" fill="#2e6ab2" />
<rect x="283" y="221" width="344" height="2" fill="#4584c6" />
<rect x="283" y="237" width="344" height="20" fill="#ddebf7" />
<rect x="283" y="277" width="344" height="20" fill="#ddebf7" />
<rect x="283" y="317" width="344" height="20" fill="#ddebf7" />
<rect x="283" y="357" width="344" height="20" fill="#ddebf7" />
<rect x="283" y="397" width="344" height="20" fill="#ddebf7" />
<rect x="283" y="437" width="344" height="20" fill="#ddebf7" />
<rect x="283" y="477" width="344" height="20" fill="#ddebf7" />
<rect x="283" y="257" width="344" height="1" fill="#9bc2e6"/>
<rect x="283" y="277" width="344" height="1" fill="#9bc2e6"/>
<rect x="283" y="297" width="344" height="1" fill="#9bc2e6"/>
<rect x="283" y="317" width="344" height="1" fill="#9bc2e6"/>
<rect x="283" y="337" width="344" height="1" fill="#9bc2e6"/>
<rect x="283" y="357" width="344" height="1" fill="#9bc2e6"/>
<rect x="283" y="377" width="344" height="1" fill="#9bc2e6"/>
<rect x="283" y="397" width="344" height="1" fill="#9bc2e6"/>
<rect x="283" y="417" width="344" height="1" fill="#9bc2e6"/>
<rect x="283" y="437" width="344" height="1" fill="#9bc2e6"/>
<rect x="283" y="457" width="344" height="1" fill="#9bc2e6"/>
<rect x="283" y="477" width="344" height="1" fill="#9bc2e6"/>
<rect x="283" y="497" width="344" height="1" fill="#9bc2e6"/>
<rect x="283" y="517" width="344" height="1" fill="#9bc2e6"/>
<rect x="283" y="237" width="344" height="1" fill="#9bc2e6"/>
<text x="285.5" y="232.7" font-size="13" fill="#fff" font-weight="700" >Столбец1</text>
<text x="464.3" y="232.7" font-size="13" fill="#fff" font-weight="700" >Столбец2</text>
<text x="547.3" y="232.7" font-size="13" fill="#fff" font-weight="700" >Столбец3</text>
<rect x="445.0" y="220.5" width="15" height="15" fill="#f4f4f4" stroke="#d0d0d0" stroke-width="1"/>
<path d="M449.0 226 H456.0 L452.5 229.8 Z" fill="#5f6a64"/>
<rect x="528.0" y="220.5" width="15" height="15" fill="#f4f4f4" stroke="#d0d0d0" stroke-width="1"/>
<path d="M532.0 226 H539.0 L535.5 229.8 Z" fill="#5f6a64"/>
<rect x="610.5" y="220.5" width="15" height="15" fill="#f4f4f4" stroke="#d0d0d0" stroke-width="1"/>
<path d="M614.5 226 H621.5 L618 229.8 Z" fill="#5f6a64"/>
<text x="285.5" y="252.7" font-size="13" fill="#000" letter-spacing="0.35" stroke="#000" stroke-width="0.12">Овощи</text>
<text x="541.5" y="252.7" font-size="13" fill="#000" text-anchor="end" textLength="63" lengthAdjust="spacingAndGlyphs" stroke="#000" stroke-width="0.12">18.02.2020</text>
<text x="624.5" y="252.7" font-size="13" fill="#000" text-anchor="end" stroke="#000" stroke-width="0.12">456</text>
<text x="285.5" y="272.7" font-size="13" fill="#000" letter-spacing="0.35" stroke="#000" stroke-width="0.12">Фрукты</text>
<text x="541.5" y="272.7" font-size="13" fill="#000" text-anchor="end" textLength="63" lengthAdjust="spacingAndGlyphs" stroke="#000" stroke-width="0.12">19.01.2020</text>
<text x="624.5" y="272.7" font-size="13" fill="#000" text-anchor="end" stroke="#000" stroke-width="0.12">258</text>
<text x="285.5" y="292.7" font-size="13" fill="#000" letter-spacing="0.35" stroke="#000" stroke-width="0.12">Одежда</text>
<text x="541.5" y="292.7" font-size="13" fill="#000" text-anchor="end" textLength="63" lengthAdjust="spacingAndGlyphs" stroke="#000" stroke-width="0.12">07.01.2021</text>
<text x="624.5" y="292.7" font-size="13" fill="#000" text-anchor="end" stroke="#000" stroke-width="0.12">123</text>
<text x="285.5" y="312.7" font-size="13" fill="#000" letter-spacing="0.35" stroke="#000" stroke-width="0.12">Обувь</text>
<text x="541.5" y="312.7" font-size="13" fill="#000" text-anchor="end" textLength="63" lengthAdjust="spacingAndGlyphs" stroke="#000" stroke-width="0.12">05.01.2021</text>
<text x="624.5" y="312.7" font-size="13" fill="#000" text-anchor="end" stroke="#000" stroke-width="0.12">456</text>
<text x="285.5" y="332.7" font-size="13" fill="#000" textLength="168" lengthAdjust="spacingAndGlyphs" stroke="#000" stroke-width="0.12">Бытовые принадлежности</text>
<text x="541.5" y="332.7" font-size="13" fill="#000" text-anchor="end" textLength="63" lengthAdjust="spacingAndGlyphs" stroke="#000" stroke-width="0.12">16.12.2020</text>
<text x="624.5" y="332.7" font-size="13" fill="#000" text-anchor="end" stroke="#000" stroke-width="0.12">245</text>
<text x="285.5" y="352.7" font-size="13" fill="#000" letter-spacing="0.35" stroke="#000" stroke-width="0.12">Овощи</text>
<text x="541.5" y="352.7" font-size="13" fill="#000" text-anchor="end" textLength="63" lengthAdjust="spacingAndGlyphs" stroke="#000" stroke-width="0.12">18.02.2020</text>
<text x="624.5" y="352.7" font-size="13" fill="#000" text-anchor="end" stroke="#000" stroke-width="0.12">240,4</text>
<text x="285.5" y="372.7" font-size="13" fill="#000" letter-spacing="0.35" stroke="#000" stroke-width="0.12">Фрукты</text>
<text x="541.5" y="372.7" font-size="13" fill="#000" text-anchor="end" textLength="63" lengthAdjust="spacingAndGlyphs" stroke="#000" stroke-width="0.12">19.01.2020</text>
<text x="624.5" y="372.7" font-size="13" fill="#000" text-anchor="end" stroke="#000" stroke-width="0.12">218</text>
<text x="285.5" y="392.7" font-size="13" fill="#000" letter-spacing="0.35" stroke="#000" stroke-width="0.12">Одежда</text>
<text x="541.5" y="392.7" font-size="13" fill="#000" text-anchor="end" textLength="63" lengthAdjust="spacingAndGlyphs" stroke="#000" stroke-width="0.12">07.01.2021</text>
<text x="624.5" y="392.7" font-size="13" fill="#000" text-anchor="end" stroke="#000" stroke-width="0.12">195,6</text>
<text x="285.5" y="412.7" font-size="13" fill="#000" letter-spacing="0.35" stroke="#000" stroke-width="0.12">Обувь</text>
<text x="541.5" y="412.7" font-size="13" fill="#000" text-anchor="end" textLength="63" lengthAdjust="spacingAndGlyphs" stroke="#000" stroke-width="0.12">05.01.2021</text>
<text x="624.5" y="412.7" font-size="13" fill="#000" text-anchor="end" stroke="#000" stroke-width="0.12">173,2</text>
<text x="285.5" y="432.7" font-size="13" fill="#000" textLength="168" lengthAdjust="spacingAndGlyphs" stroke="#000" stroke-width="0.12">Бытовые принадлежности</text>
<text x="541.5" y="432.7" font-size="13" fill="#000" text-anchor="end" textLength="63" lengthAdjust="spacingAndGlyphs" stroke="#000" stroke-width="0.12">16.12.2020</text>
<text x="624.5" y="432.7" font-size="13" fill="#000" text-anchor="end" stroke="#000" stroke-width="0.12">150,8</text>
<text x="285.5" y="452.7" font-size="13" fill="#000" letter-spacing="0.35" stroke="#000" stroke-width="0.12">Овощи</text>
<text x="541.5" y="452.7" font-size="13" fill="#000" text-anchor="end" textLength="63" lengthAdjust="spacingAndGlyphs" stroke="#000" stroke-width="0.12">18.02.2020</text>
<text x="624.5" y="452.7" font-size="13" fill="#000" text-anchor="end" stroke="#000" stroke-width="0.12">128,4</text>
<text x="285.5" y="472.7" font-size="13" fill="#000" letter-spacing="0.35" stroke="#000" stroke-width="0.12">Фрукты</text>
<text x="541.5" y="472.7" font-size="13" fill="#000" text-anchor="end" textLength="63" lengthAdjust="spacingAndGlyphs" stroke="#000" stroke-width="0.12">19.01.2020</text>
<text x="624.5" y="472.7" font-size="13" fill="#000" text-anchor="end" stroke="#000" stroke-width="0.12">106</text>
<text x="285.5" y="492.7" font-size="13" fill="#000" letter-spacing="0.35" stroke="#000" stroke-width="0.12">Одежда</text>
<text x="541.5" y="492.7" font-size="13" fill="#000" text-anchor="end" textLength="63" lengthAdjust="spacingAndGlyphs" stroke="#000" stroke-width="0.12">07.01.2021</text>
<text x="624.5" y="492.7" font-size="13" fill="#000" text-anchor="end" stroke="#000" stroke-width="0.12">83,6</text>
<text x="285.5" y="512.7" font-size="13" fill="#000" letter-spacing="0.35" stroke="#000" stroke-width="0.12">Обувь</text>
<text x="541.5" y="512.7" font-size="13" fill="#000" text-anchor="end" textLength="63" lengthAdjust="spacingAndGlyphs" stroke="#000" stroke-width="0.12">05.01.2021</text>
<text x="624.5" y="512.7" font-size="13" fill="#000" text-anchor="end" stroke="#000" stroke-width="0.12">61,2</text>
<text x="285.5" y="532.7" font-size="13" fill="#000" textLength="168" lengthAdjust="spacingAndGlyphs" stroke="#000" stroke-width="0.12">Бытовые принадлежности</text>
<text x="541.5" y="532.7" font-size="13" fill="#000" text-anchor="end" textLength="63" lengthAdjust="spacingAndGlyphs" stroke="#000" stroke-width="0.12">16.12.2020</text>
<text x="624.5" y="532.7" font-size="13" fill="#000" text-anchor="end" stroke="#000" stroke-width="0.12">38,8</text>
<text x="285.5" y="552.7" font-size="13" fill="#000" letter-spacing="0.35" stroke="#000" stroke-width="0.12">Овощи</text>
<text x="541.5" y="552.7" font-size="13" fill="#000" text-anchor="end" textLength="63" lengthAdjust="spacingAndGlyphs" stroke="#000" stroke-width="0.12">18.02.2020</text>
<text x="624.5" y="552.7" font-size="13" fill="#000" text-anchor="end" stroke="#000" stroke-width="0.12">16,4</text>
<text x="285.5" y="572.7" font-size="13" fill="#000" letter-spacing="0.35" stroke="#000" stroke-width="0.12">Фрукты</text>
<text x="541.5" y="572.7" font-size="13" fill="#000" text-anchor="end" textLength="63" lengthAdjust="spacingAndGlyphs" stroke="#000" stroke-width="0.12">19.01.2020</text>
<text x="624.5" y="572.7" font-size="13" fill="#000" text-anchor="end" stroke="#000" stroke-width="0.12">-6</text>
<text x="285.5" y="592.7" font-size="13" fill="#000" letter-spacing="0.35" stroke="#000" stroke-width="0.12">Одежда</text>
<text x="541.5" y="592.7" font-size="13" fill="#000" text-anchor="end" textLength="63" lengthAdjust="spacingAndGlyphs" stroke="#000" stroke-width="0.12">07.01.2021</text>
<text x="624.5" y="592.7" font-size="13" fill="#000" text-anchor="end" stroke="#000" stroke-width="0.12">-28,4</text>
<text x="285.5" y="612.7" font-size="13" fill="#000" letter-spacing="0.35" stroke="#000" stroke-width="0.12">Обувь</text>
<text x="541.5" y="612.7" font-size="13" fill="#000" text-anchor="end" textLength="63" lengthAdjust="spacingAndGlyphs" stroke="#000" stroke-width="0.12">05.01.2021</text>
<text x="624.5" y="612.7" font-size="13" fill="#000" text-anchor="end" stroke="#000" stroke-width="0.12">-50,8</text>
<text x="285.5" y="632.7" font-size="13" fill="#000" textLength="168" lengthAdjust="spacingAndGlyphs" stroke="#000" stroke-width="0.12">Бытовые принадлежности</text>
<text x="541.5" y="632.7" font-size="13" fill="#000" text-anchor="end" textLength="63" lengthAdjust="spacingAndGlyphs" stroke="#000" stroke-width="0.12">16.12.2020</text>
<text x="624.5" y="632.7" font-size="13" fill="#000" text-anchor="end" stroke="#000" stroke-width="0.12">-73,2</text>
<text x="285.5" y="652.7" font-size="13" fill="#000" letter-spacing="0.35" stroke="#000" stroke-width="0.12">Овощи</text>
<text x="541.5" y="652.7" font-size="13" fill="#000" text-anchor="end" textLength="63" lengthAdjust="spacingAndGlyphs" stroke="#000" stroke-width="0.12">18.02.2020</text>
<text x="624.5" y="652.7" font-size="13" fill="#000" text-anchor="end" stroke="#000" stroke-width="0.12">-95,6</text>
<text x="285.5" y="672.7" font-size="13" fill="#000" letter-spacing="0.35" stroke="#000" stroke-width="0.12">Фрукты</text>
<text x="541.5" y="672.7" font-size="13" fill="#000" text-anchor="end" textLength="63" lengthAdjust="spacingAndGlyphs" stroke="#000" stroke-width="0.12">19.01.2020</text>
<text x="624.5" y="672.7" font-size="13" fill="#000" text-anchor="end" stroke="#000" stroke-width="0.12">-118</text>
<text x="285.5" y="692.7" font-size="13" fill="#000" letter-spacing="0.35" stroke="#000" stroke-width="0.12">Одежда</text>
<text x="541.5" y="692.7" font-size="13" fill="#000" text-anchor="end" textLength="63" lengthAdjust="spacingAndGlyphs" stroke="#000" stroke-width="0.12">07.01.2021</text>
<text x="624.5" y="692.7" font-size="13" fill="#000" text-anchor="end" stroke="#000" stroke-width="0.12">-140,4</text>
<defs><clipPath id="r29"><rect x="27" y="698" width="1151" height="6"/></clipPath></defs>
<g clip-path="url(#r29)">
<text x="285.5" y="713" font-size="13" fill="#000" >Обувь</text>
</g>
<rect x="691.5" y="237.5" width="64" height="100" fill="none" stroke="#000" stroke-width="1"/>
<rect x="755.5" y="357.5" width="64" height="100" fill="none" stroke="#000" stroke-width="1"/>
<rect x="627" y="497" width="193" height="1" fill="#000"/>
<rect x="883" y="297" width="65" height="21" fill="none" stroke="#217346" stroke-width="2"/>
<rect x="944" y="315" width="6" height="6" fill="#fff" />
<rect x="945" y="316" width="5" height="5" fill="#217346" />
<defs><linearGradient id="shR" x1="0" x2="1" y1="0" y2="0"><stop offset="0" stop-color="#8f9999" stop-opacity="0.9"/><stop offset="1" stop-color="#9aa3a3" stop-opacity="0"/></linearGradient><linearGradient id="shB" x1="0" x2="0" y1="0" y2="1"><stop offset="0" stop-color="#8f9999" stop-opacity="0.9"/><stop offset="1" stop-color="#9aa3a3" stop-opacity="0"/></linearGradient></defs>
<rect x="629" y="221" width="5" height="297" fill="url(#shR)"/>
<rect x="282" y="518" width="352" height="5" fill="url(#shB)"/>
<rect x="283" y="237" width="5" height="278" fill="url(#shR)"/>
<rect x="281.5" y="217.5" width="346" height="299" fill="none" stroke="#ff0000" stroke-width="3"/>
<rect x="1179" y="198" width="20" height="506" fill="#e6e6e6" />
<rect x="1182.5" y="200.5" width="14" height="14" fill="#fff" stroke="#c6c6c6" stroke-width="1"/>
<path d="M1186 210 H1193 L1189.5 206.5 Z" fill="#666"/>
<rect x="1182" y="215" width="15" height="21" fill="#dedede" />
<rect x="1182.5" y="236.5" width="14" height="129" fill="#fff" stroke="#c6c6c6" stroke-width="1"/>
<rect x="1182" y="366" width="15" height="324" fill="#dedede" />
<rect x="1182.5" y="690.5" width="14" height="13" fill="#fff" stroke="#c6c6c6" stroke-width="1"/>
<path d="M1186 695 H1193 L1189.5 698.5 Z" fill="#666"/>
<rect x="1" y="704" width="1198" height="28" fill="#e6e6e6" />
<rect x="1" y="704" width="101" height="1" fill="#ababab"/>
<rect x="161" y="704" width="1018" height="1" fill="#ababab"/>
<rect x="102" y="704" width="59" height="24" fill="#ffffff" />
<rect x="101" y="704" width="1" height="24" fill="#ababab"/>
<rect x="161" y="704" width="1" height="24" fill="#ababab"/>
<rect x="101" y="727" width="61" height="2" fill="#217346" />
<text x="130.5" y="722" font-size="12" fill="#217346" text-anchor="middle" font-weight="700" >Лист1</text>
<text x="190.5" y="722" font-size="12" fill="#333" text-anchor="middle" >Лист2</text>
<rect x="220" y="708" width="1" height="20" fill="#a0a0a0"/>
<circle cx="261.5" cy="717.5" r="7.3" fill="none" stroke="#666" stroke-width="1.4"/>
<path d="M257.8 717.5 H265.2 M261.5 713.8 V721.2" stroke="#5e6a64" stroke-width="2"/>
<path d="M32 714.5 L28.5 718 L32 721.5 Z" fill="#c0c0c0"/>
<path d="M57 714.5 L60.5 718 L57 721.5 Z" fill="#c0c0c0"/>
<rect x="720" y="712.25" width="1.5" height="1.5" fill="#8a8a8a"/>
<rect x="720" y="716.75" width="1.5" height="1.5" fill="#8a8a8a"/>
<rect x="720" y="721.25" width="1.5" height="1.5" fill="#8a8a8a"/>
<rect x="737.5" y="711.5" width="14" height="14" fill="#fff" stroke="#c6c6c6" stroke-width="1"/>
<path d="M746.5 714.5 L742.5 718.5 L746.5 722.5 Z" fill="#666"/>
<rect x="751.5" y="711.5" width="384" height="14" fill="#fff" stroke="#c6c6c6" stroke-width="1"/>
<rect x="1136" y="711" width="28" height="15" fill="#dedede" />
<rect x="1164.5" y="711.5" width="14" height="14" fill="#fff" stroke="#c6c6c6" stroke-width="1"/>
<path d="M1170 714.5 L1174 718.5 L1170 722.5 Z" fill="#666"/>
<rect x="1" y="732" width="1198" height="21" fill="#f1f1f1" />
<rect x="1" y="732" width="1198" height="1" fill="#d4d4d4"/>
<text x="9.5" y="746" font-size="11.3" fill="#666" >Готово</text>
<path d="M74.5 742 V748.5 H85.5 V737.5 H80" fill="#fff" stroke="#5e6a64" stroke-width="1"/>
<rect x="80" y="737" width="6" height="2" fill="#5e6a64" />
<circle cx="76.2" cy="738.6" r="2.6" fill="#5e6a64"/>
<rect x="76" y="741.5" width="2" height="1" fill="#5e6a64" />
<rect x="79" y="741.5" width="2" height="1" fill="#5e6a64" />
<rect x="82" y="741.5" width="2" height="1" fill="#5e6a64" />
<rect x="76" y="743.5" width="2" height="1" fill="#5e6a64" />
<rect x="79" y="743.5" width="2" height="1" fill="#5e6a64" />
<rect x="82" y="743.5" width="2" height="1" fill="#5e6a64" />
<rect x="76" y="745.5" width="2" height="1" fill="#5e6a64" />
<rect x="79" y="745.5" width="2" height="1" fill="#5e6a64" />
<rect x="82" y="745.5" width="2" height="1" fill="#5e6a64" />
<rect x="897" y="733" width="38" height="20" fill="#d5d5d5" />
<rect x="909.5" y="736.5" width="13" height="12" fill="none" stroke="#5e6a64" stroke-width="1.2"/>
<path d="M909.5 740.5 H922.5 M909.5 744.5 H922.5 M913.8 736.5 V748.5 M918.2 736.5 V748.5" stroke="#5e6a64" stroke-width="1"/>
<rect x="948.5" y="736.5" width="13" height="12" fill="none" stroke="#5e6a64" stroke-width="1.2"/>
<rect x="951.5" y="739.5" width="7" height="6" fill="none" stroke="#5e6a64" stroke-width="1"/>
<path d="M952.5 741.5 H957.5 M952.5 743.5 H957.5" stroke="#5e6a64" stroke-width="0.8"/>
<path d="M985.5 748.5 V736.5 H999.5 V748.5 M985.5 744.5 H999.5 M992.5 736.5 V742" fill="none" stroke="#5e6a64" stroke-width="1.2"/>
<rect x="1016" y="742" width="7" height="2" fill="#5e6a64" />
<rect x="1027" y="742" width="99" height="1" fill="#a8a8a8"/>
<rect x="1074" y="737" width="4" height="11" fill="#5e6a64" />
<path d="M1130 742.8 H1138 M1134 738.8 V746.8" stroke="#5e6a64" stroke-width="2"/>
<text x="1155" y="746" font-size="10.5" fill="#555" >100%</text>
<rect x="0" y="0" width="1" height="753" fill="#217346"/>
</svg>
</body></html>
